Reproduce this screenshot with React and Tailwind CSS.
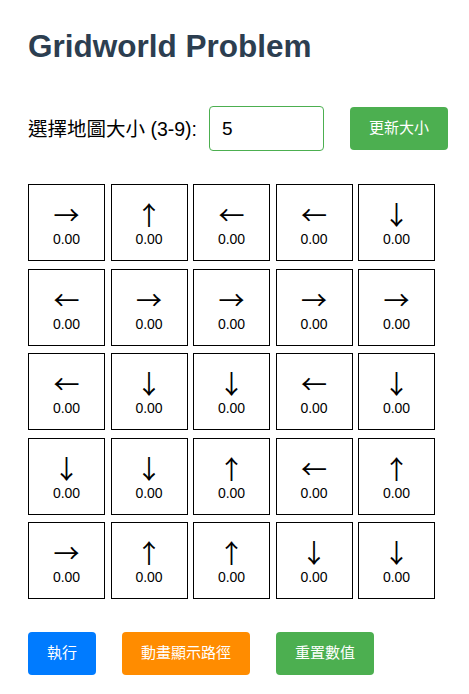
import React, { useState } from 'react';

const ARROWS = {
  U: '↑',
  D: '↓',
  L: '←',
  R: '→',
};

const initialPolicy = [
  ['R', 'U', 'L', 'L', 'D'],
  ['L', 'R', 'R', 'R', 'R'],
  ['L', 'D', 'D', 'L', 'D'],
  ['D', 'D', 'U', 'L', 'U'],
  ['R', 'U', 'U', 'D', 'D'],
];

function Cell({ dir, value }) {
  return (
    <div className="w-[77px] h-[77px] border border-black flex flex-col items-center pt-[15px]">
      <div
        className="text-[26px] leading-[28px] text-black"
        style={{ fontFamily: '"Noto Sans CJK TC", sans-serif' }}
      >
        {ARROWS[dir]}
      </div>
      <div className="mt-[2px] text-[14px] leading-[18px] text-black">{value.toFixed(2)}</div>
    </div>
  );
}

export default function App() {
  const [size, setSize] = useState(5);
  const [policy] = useState(initialPolicy);

  return (
    <div
      className="min-h-screen bg-white px-7 pt-7 text-black"
      style={{ fontFamily: '"Liberation Sans", Arial, "Noto Sans CJK TC", sans-serif' }}
    >
      <h1 className="text-[31.5px] leading-[37px] font-bold text-[#2c3e50]">Gridworld Problem</h1>

      <div className="mt-[41px] flex items-center">
        <label className="shrink-0 whitespace-nowrap text-[19.5px] leading-[22px]">選擇地圖大小 (3-9):</label>
        <input
          type="number"
          min={3}
          max={9}
          value={size}
          onChange={(e) => setSize(e.target.value)}
          className="ml-3 w-[115px] h-[45px] shrink-0 border border-[#4caf50] rounded-[4px] pl-3 text-[19px] outline-none"
        />
        <button className="ml-[26px] h-[43px] shrink-0 whitespace-nowrap px-[19px] rounded-[4px] bg-[#4caf50] text-white text-[15px]">
          更新大小
        </button>
      </div>

      <div className="mt-[33px] grid grid-cols-[repeat(5,77px)] gap-x-[5.5px] gap-y-[7.5px]">
        {policy.map((row, r) =>
          row.map((dir, c) => <Cell key={`${r}-${c}`} dir={dir} value={0} />)
        )}
      </div>

      <div className="mt-[33px] flex gap-[26px]">
        <button className="h-[43px] px-[19px] rounded-[4px] bg-[#007bff] text-white text-[15px]">執行</button>
        <button className="h-[43px] px-[19px] rounded-[4px] bg-[#ff8c00] text-white text-[15px]">動畫顯示路徑</button>
        <button className="h-[43px] px-[19px] rounded-[4px] bg-[#4caf50] text-white text-[15px]">重置數值</button>
      </div>
    </div>
  );
}
